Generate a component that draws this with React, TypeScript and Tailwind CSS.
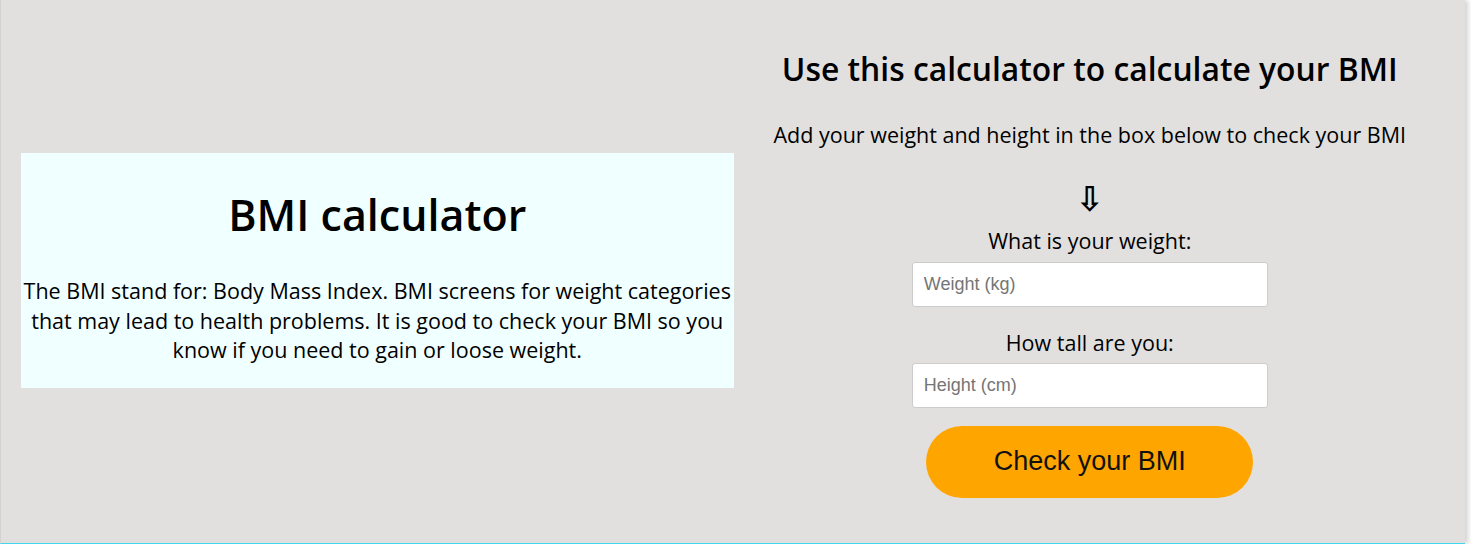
export default function App() {
  return (
    <div className="min-h-screen bg-white font-['Open_Sans',sans-serif] text-black">
      <div className="w-[1465px] h-[544px] bg-[#e2e0df] border-b border-[#40d8f0] border-l border-l-[#d4d2d1] shadow-[3px_0_5px_rgba(0,0,0,0.18)] flex items-center pl-[20px] pr-[19px]">
        {/* Intro */}
        <div className="w-[713px] bg-[#f0ffff] flex flex-col items-center pt-[33px] pb-[23px] -mt-[2px]">
          <h1 className="text-[43px] font-semibold leading-[58px] mb-[32px]">BMI calculator</h1>
          <p className="text-[21.5px] leading-[29.5px] text-center">
            The BMI stand for: Body Mass Index. BMI screens for weight categories that may lead to health problems. It is good to check your BMI so you know if you need to gain or loose weight.
          </p>
        </div>

        {/* Calculator */}
        <div className="w-[713px] flex flex-col items-center pt-[2px]">
          <h2 className="text-[31.8px] font-semibold leading-[41px]">Use this calculator to calculate your BMI</h2>
          <p className="text-[21.5px] leading-[27px] mt-[32px]">Add your weight and height in the box below to check your BMI</p>
          <div className="font-['DejaVu_Sans',sans-serif] text-[34px] font-bold leading-[35px] mt-[34px]">⇩</div>
          <label className="text-[21.5px] leading-[27px] mt-[10px]">What is your weight:</label>
          <input
            type="number"
            placeholder="Weight (kg)"
            className="mt-[8px] w-[356px] h-[45px] bg-white border border-[#ccc] rounded-[3px] px-[11px] font-['Liberation_Sans',sans-serif] text-[18px] placeholder:text-[#757575] outline-none"
          />
          <label className="text-[21.5px] leading-[27px] mt-[22px]">How tall are you:</label>
          <input
            type="number"
            placeholder="Height (cm)"
            className="mt-[7px] w-[356px] h-[45px] bg-white border border-[#ccc] rounded-[3px] px-[11px] font-['Liberation_Sans',sans-serif] text-[18px] placeholder:text-[#757575] outline-none"
          />
          <button className="mt-[18px] w-[327px] h-[72px] bg-[#ffa500] rounded-full font-['Liberation_Sans',sans-serif] text-[27px] text-[#111]">
            Check your BMI
          </button>
        </div>
      </div>
    </div>
  );
}
